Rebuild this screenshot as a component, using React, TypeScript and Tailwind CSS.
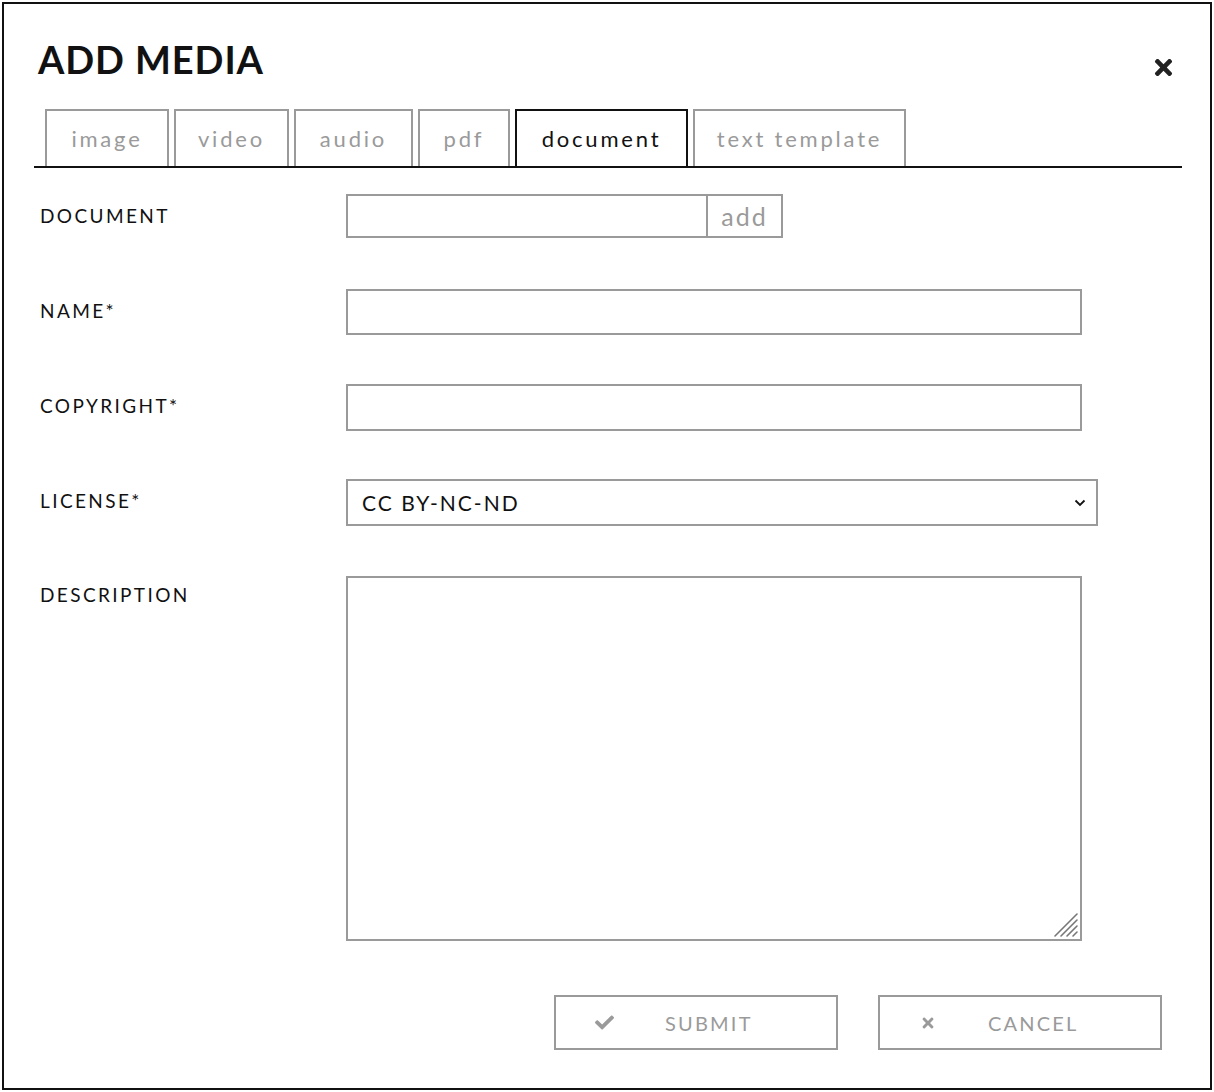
import React from "react";
import { FaTimes, FaCheck } from "react-icons/fa";

const tabs = [
  { label: "image", w: "w-[124px]" },
  { label: "video", w: "w-[115px]" },
  { label: "audio", w: "w-[119px]" },
  { label: "pdf", w: "w-[92px]" },
  { label: "document", w: "w-[173px]", active: true },
  { label: "text template", w: "w-[213px]" },
];

function Label({ children, h = "leading-[44px]" }: { children: React.ReactNode; h?: string }) {
  return (
    <div className={`w-[306px] shrink-0 text-[19px] tracking-[2.4px] text-[#111] ${h}`}>{children}</div>
  );
}

export default function App() {
  return (
    <div
      className="w-[1214px] h-[1092px] bg-white p-[2px]"
      style={{ fontFamily: "Lato, 'Open Sans', sans-serif" }}
    >
      <div className="w-full h-full border-2 border-[#111] bg-white flex flex-col">
        {/* header */}
        <div className="flex items-start justify-between pl-[34px] pr-[34px] pt-[31px] h-[105px]">
          <h1 className="text-[38px] leading-[48px] font-bold tracking-[0.9px] text-[#111]">ADD MEDIA</h1>
          <button className="mt-[20px] text-[#222]" aria-label="close">
            <FaTimes size={25} />
          </button>
        </div>

        {/* tabs */}
        <div className="mx-[30px] mr-[28px] border-b-2 border-[#111] flex gap-[5px] pl-[11px]">
          {tabs.map((t) => (
            <div
              key={t.label}
              className={`${t.w} h-[57px] border-2 border-b-0 flex items-center justify-center text-[22px] tracking-[2.8px] ${
                t.active ? "border-[#111] text-[#111]" : "border-[#9a9a9a] text-[#9a9a9a]"
              }`}
            >
              {t.label}
            </div>
          ))}
        </div>

        {/* form */}
        <div className="pl-[36px] pt-[26px] flex flex-col">
          <div className="flex h-[95px] items-start">
            <Label>DOCUMENT</Label>
            <div className="flex h-[44px]">
              <input className="w-[362px] h-[44px] border-2 border-[#9a9a9a] outline-none" />
              <button className="w-[75px] h-[44px] border-2 border-l-0 border-[#9a9a9a] text-[25px] leading-none tracking-[2px] text-[#9a9a9a]">
                add
              </button>
            </div>
          </div>
          <div className="flex h-[95px] items-start">
            <Label h="leading-[44px]">NAME*</Label>
            <input className="w-[736px] h-[46px] border-2 border-[#9a9a9a] outline-none" />
          </div>
          <div className="flex h-[95px] items-start">
            <Label h="leading-[44px]">COPYRIGHT*</Label>
            <input className="w-[736px] h-[47px] border-2 border-[#9a9a9a] outline-none" />
          </div>
          <div className="flex h-[97px] items-start">
            <Label h="leading-[44px]">LICENSE*</Label>
            <div className="relative w-[752px] h-[47px]">
              <select
                defaultValue="CC BY-NC-ND"
                className="appearance-none w-full h-full border-2 border-[#9a9a9a] bg-white pl-[14px] text-[21px] tracking-[2px] text-[#111] outline-none"
                style={{ fontFamily: "Lato, sans-serif" }}
              >
                <option>CC BY-NC-ND</option>
                <option>CC BY</option>
                <option>CC BY-SA</option>
              </select>
              <svg
                className="absolute right-[12px] top-[20px] pointer-events-none"
                width="12"
                height="8"
                viewBox="0 0 12 8"
                fill="none"
                stroke="#111"
                strokeWidth="1.8"
              >
                <path d="M1.5 1.5 L6 6 L10.5 1.5" />
              </svg>
            </div>
          </div>
          <div className="flex items-start">
            <Label h="leading-[38px]">DESCRIPTION</Label>
            <div className="relative w-[736px] h-[365px]">
              <textarea className="w-full h-full border-2 border-[#9a9a9a] outline-none resize-none block" />
              <svg
                className="absolute right-[3px] bottom-[3px] pointer-events-none"
                width="26"
                height="26"
                viewBox="0 0 26 26"
                stroke="#777"
                strokeWidth="1.6"
                strokeLinecap="round"
              >
                <path d="M2 24 L24 2" />
                <path d="M8 24 L24 8" />
                <path d="M14 24 L24 14" />
                <path d="M20 24 L24 20" />
              </svg>
            </div>
          </div>
        </div>

        {/* buttons */}
        <div className="flex justify-end gap-[40px] pr-[48px] pt-[54px]">
          <button className="w-[284px] h-[55px] border-2 border-[#9a9a9a] flex items-center text-[#9a9a9a]">
            <span className="w-[96px] flex justify-center">
              <FaCheck size={19} />
            </span>
            <span className="ml-[13px] text-[20px] tracking-[2.2px]">SUBMIT</span>
          </button>
          <button className="w-[284px] h-[55px] border-2 border-[#9a9a9a] flex items-center text-[#9a9a9a]">
            <span className="w-[96px] flex justify-center">
              <FaTimes size={16} />
            </span>
            <span className="ml-[12px] text-[20px] tracking-[2.2px]">CANCEL</span>
          </button>
        </div>
      </div>
    </div>
  );
}
